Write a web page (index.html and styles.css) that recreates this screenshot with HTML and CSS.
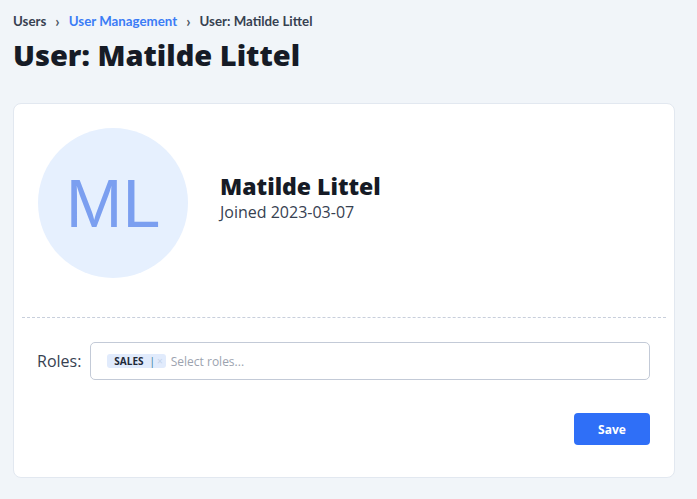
FILE: index.html
```html
<!DOCTYPE html>
<html lang="en">
<head>
  <meta charset="UTF-8">
  <meta name="viewport" content="width=device-width, initial-scale=1.0">
  <title>User: Matilde Littel</title>
  <link rel="stylesheet" href="styles.css">
</head>
<body>
  <nav class="breadcrumb">
    <a href="#" class="crumb">Users</a>
    <span class="sep">&#8250;</span>
    <a href="#" class="crumb link">User Management</a>
    <span class="sep">&#8250;</span>
    <span class="crumb">User: Matilde Littel</span>
  </nav>
  <h1 class="title">User: Matilde Littel</h1>

  <div class="card">
    <div class="profile">
      <div class="avatar">ML</div>
      <div class="info">
        <div class="name">Matilde Littel</div>
        <div class="joined">Joined 2023-03-07</div>
      </div>
    </div>
    <div class="divider"></div>
    <div class="form">
      <div class="roles-row">
        <label class="roles-label">Roles:</label>
        <div class="select">
          <span class="tag">SALES <span class="tag-bar">|</span><span class="tag-x">&times;</span></span>
          <span class="placeholder">Select roles...</span>
        </div>
      </div>
      <div class="actions">
        <button class="save">Save</button>
      </div>
    </div>
  </div>
</body>
</html>
```

FILE: styles.css
```css
* {
  box-sizing: border-box;
  margin: 0;
  padding: 0;
}
body {
  font-family: 'Open Sans', 'Noto Sans', sans-serif;
  background: #f1f5f9;
  color: #111827;
  padding: 12px 13px 0 13px;
}
.breadcrumb {
  display: flex;
  align-items: center;
  gap: 9px;
  font-family: 'Lato', 'Open Sans', sans-serif;
  font-size: 13.3px;
  font-weight: 700;
  height: 18px;
}
.crumb {
  color: #374151;
  text-decoration: none;
}
.crumb.link {
  color: #3b7cf6;
}
.sep {
  color: #4b5563;
  font-size: 15px;
  line-height: 1;
}
.title {
  font-size: 29px;
  font-weight: 800;
  line-height: 38px;
  margin-top: 6px;
  color: #161b26;
}
.card {
  margin-top: 29px;
  background: #fff;
  border: 1px solid #e2e8f0;
  border-radius: 8px;
  width: 662px;
}
.profile {
  display: flex;
  align-items: center;
  gap: 32px;
  padding: 24px 24px 39px 24px;
}
.avatar {
  width: 150px;
  height: 150px;
  border-radius: 50%;
  background: #e6f0fe;
  color: #7b9ff0;
  font-family: 'Liberation Sans', Arial, sans-serif;
  font-size: 68px;
  display: flex;
  align-items: center;
  justify-content: center;
}
.info {
  margin-top: -12px;
}
.name {
  font-size: 23px;
  font-weight: 800;
  color: #161b26;
  line-height: 28px;
}
.joined {
  font-size: 16px;
  color: #374151;
  margin-top: 1px;
}
.divider {
  margin: 0 8px;
  border-top: 1px dashed #c8cfdc;
}
.form {
  padding: 24px 24px 32px 23px;
}
.roles-row {
  display: flex;
  align-items: center;
  gap: 9px;
}
.roles-label {
  font-size: 16px;
  color: #374151;
}
.select {
  flex: 1;
  height: 38px;
  border: 1px solid #c3cad7;
  border-radius: 5px;
  display: flex;
  align-items: center;
  padding-left: 16px;
  gap: 5px;
}
.tag {
  background: #e1ebfc;
  border-radius: 3px;
  font-size: 10px;
  font-weight: 700;
  color: #1f2937;
  height: 14px;
  padding: 0 0 0 7px;
  display: flex;
  align-items: center;
}
.tag-bar {
  color: #2b7a8f;
  font-weight: 400;
  margin-left: 6px;
}
.tag-x {
  color: #c5d3ea;
  font-weight: 400;
  padding: 0 3px 0 2px;
}
.placeholder {
  font-size: 12px;
  color: #9ca3af;
}
.actions {
  display: flex;
  justify-content: flex-end;
  margin-top: 33px;
}
.save {
  width: 76px;
  height: 32px;
  background: #2f6ff7;
  color: #fff;
  border: none;
  border-radius: 4px;
  font-family: inherit;
  font-size: 12px;
  font-weight: 700;
  cursor: pointer;
}
```
